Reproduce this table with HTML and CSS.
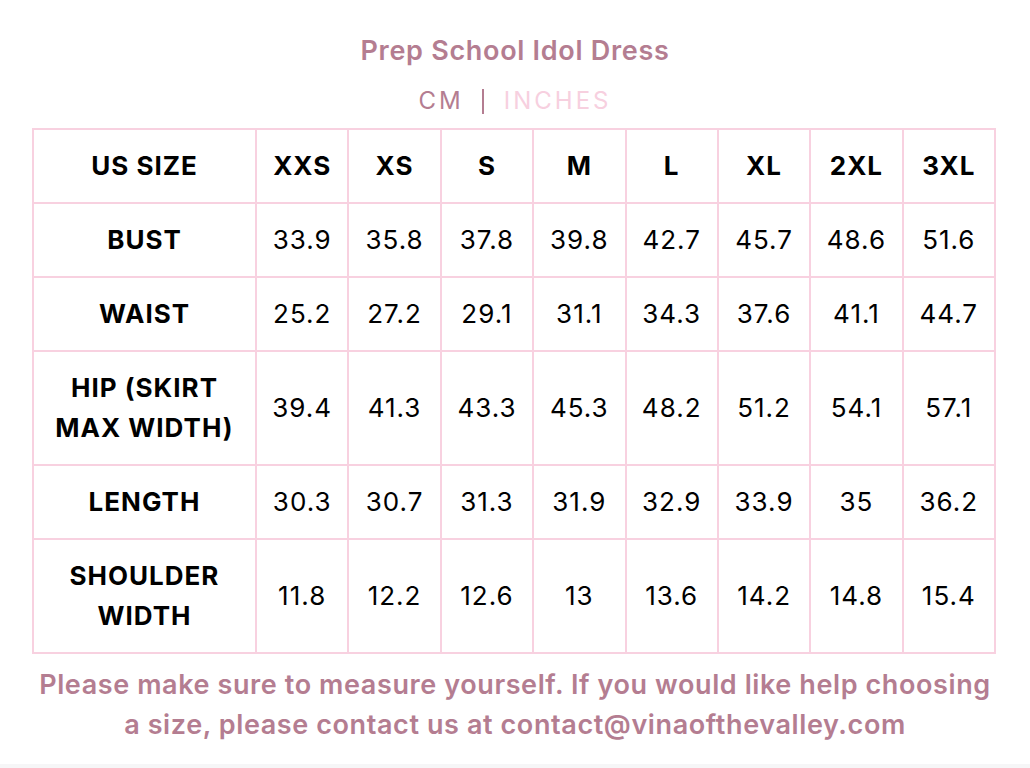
FILE: index.html
```html
<!DOCTYPE html>
<html>
<head>
<meta charset="utf-8">
<link rel="stylesheet" href="styles.css">
</head>
<body>
<div class="page">
  <h1 class="title">Prep School Idol Dress</h1>
  <div class="units"><span class="unit active">CM</span><span class="sep"></span><span class="unit">INCHES</span></div>
  <table class="chart">
    <colgroup><col class="c-label"><col><col><col><col><col><col><col><col></colgroup>
    <tr class="head"><th>US SIZE</th><th>XXS</th><th>XS</th><th>S</th><th>M</th><th>L</th><th>XL</th><th>2XL</th><th>3XL</th></tr>
    <tr><th>BUST</th><td>33.9</td><td>35.8</td><td>37.8</td><td>39.8</td><td>42.7</td><td>45.7</td><td>48.6</td><td>51.6</td></tr>
    <tr><th>WAIST</th><td>25.2</td><td>27.2</td><td>29.1</td><td>31.1</td><td>34.3</td><td>37.6</td><td>41.1</td><td>44.7</td></tr>
    <tr class="tall"><th>HIP (SKIRT<br>MAX WIDTH)</th><td>39.4</td><td>41.3</td><td>43.3</td><td>45.3</td><td>48.2</td><td>51.2</td><td>54.1</td><td>57.1</td></tr>
    <tr><th>LENGTH</th><td>30.3</td><td>30.7</td><td>31.3</td><td>31.9</td><td>32.9</td><td>33.9</td><td>35</td><td>36.2</td></tr>
    <tr class="tall"><th>SHOULDER<br>WIDTH</th><td>11.8</td><td>12.2</td><td>12.6</td><td>13</td><td>13.6</td><td>14.2</td><td>14.8</td><td>15.4</td></tr>
  </table>
  <p class="note">Please make sure to measure yourself. If you would like help choosing<br>a size, please contact us at contact@vinaofthevalley.com</p>
</div>
</body>
</html>
```
FILE: styles.css
```css
html, body {
  margin: 0;
  padding: 0;
}
body {
  background: #f6f6f7;
  font-family: Inter, "Liberation Sans", sans-serif;
  color: #000;
}
.page {
  background: #fff;
  height: 764px;
  padding: 35px 32px 0 32px;
  box-sizing: border-box;
}
.title {
  margin: 0;
  text-align: center;
  font-size: 27px;
  line-height: 32px;
  font-weight: 600;
  letter-spacing: 0.7px;
  color: #b47d91;
}
.units {
  margin-top: 18px;
  display: flex;
  justify-content: center;
  align-items: center;
  height: 32px;
  font-size: 24px;
  line-height: 32px;
  letter-spacing: 3px;
  color: #b47d91;
}
.units .sep {
  display: block;
  width: 2px;
  height: 25px;
  background: #b47d91;
  margin: 0 20px 0 18px;
}
.units .unit:not(.active) {
  color: #f7d0df;
}
.chart {
  margin-top: 11px;
  width: 964px;
  border-collapse: collapse;
  table-layout: fixed;
}
.chart .c-label {
  width: 223px;
}
.chart th, .chart td {
  border: 2px solid #f8d1e0;
  text-align: center;
  height: 72px;
  padding: 0;
  font-size: 26px;
  line-height: 40px;
  letter-spacing: 1px;
}
.chart th {
  font-weight: 700;
}
.chart td {
  font-weight: 400;
}
.chart tr.tall th, .chart tr.tall td {
  height: 112px;
}
.note {
  margin: 11px 0 0 0;
  text-align: center;
  font-size: 27px;
  line-height: 40px;
  font-weight: 600;
  color: #b47d91;
  letter-spacing: 0.6px;
}
```
